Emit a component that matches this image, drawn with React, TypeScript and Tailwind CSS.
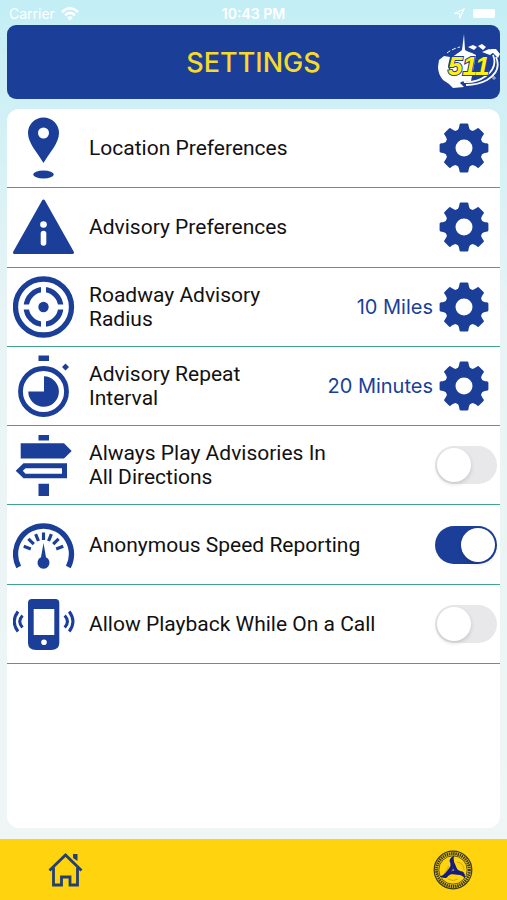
import React, { useState } from 'react';

const TOOTH_ANGLES = [0, 45, 90, 135, 180, 225, 270, 315];
const TICK_ANGLES = [-70, -46, -22, 0, 22, 46, 70];

const GearIcon = () => (
  <svg viewBox="0 0 50 50" className="block size-[50px] fill-[#1b3f98]" aria-hidden="true">
    <circle cx="25" cy="25" r="19" />
    {TOOTH_ANGLES.map((angle) => (
      <path
        key={angle}
        d="M16.5 8.5C19.5 7.5 20 5 20.6 1.5Q20.8.6 21.8.6H28.2Q29.2.6 29.4 1.5C30 5 30.5 7.5 33.5 8.5Z"
        transform={`rotate(${angle} 25 25)`}
      />
    ))}
    <circle cx="25" cy="25" r="8.5" fill="#fff" />
  </svg>
);

const PinIcon = () => (
  <>
    <path
      fillRule="evenodd"
      d="M30.5.5A15.5 15.5 0 0 0 15 16C15 26 24 35 30.5 46C37 35 46 26 46 16A15.5 15.5 0 0 0 30.5.5ZM30.5 10.5a5.5 5.5 0 1 1 0 11a5.5 5.5 0 0 1 0-11Z"
    />
    <ellipse cx="30.5" cy="57.5" rx="10.3" ry="4" />
  </>
);

const WarningIcon = () => (
  <>
    <path d="M30.5 5L59.5 56.5H1.5Z" stroke="#1b3f98" strokeWidth="3" strokeLinejoin="round" />
    <circle cx="30.5" cy="28.5" r="3.3" fill="#fff" />
    <path d="M30.5 37.5V47" stroke="#fff" strokeWidth="5.6" strokeLinecap="round" />
  </>
);

const RadiusIcon = () => (
  <>
    <g fill="none" stroke="#1b3f98" strokeWidth="5.3">
      <circle cx="30.5" cy="31" r="28" />
      <circle cx="30.5" cy="31" r="17.3" />
    </g>
    <path d="M30.5 10V22M30.5 40V52M9.5 31H21.5M39.5 31H51.5" stroke="#fff" strokeWidth="5" />
    <circle cx="30.5" cy="31" r="5.2" />
  </>
);

const TimerIcon = () => (
  <>
    <path d="M25.5.5H36V6H25.5ZM52.5 8.5L56 12L52.5 15.5L49 12Z" />
    <circle cx="30.5" cy="36.5" r="23" fill="none" stroke="#1b3f98" strokeWidth="4.8" />
    <path d="M31 21.2A15.3 15.3 0 1 1 15.3 36.5H31Z" />
  </>
);

const SignIcon = () => (
  <>
    <path d="M25.5 1H36V6.5H25.5ZM7.7 9.3H51L58.7 17L51 24.5H7.7ZM25.5 49.7H36V62H25.5Z" />
    <path fillRule="evenodd" d="M2.7 36.8L10.5 29.3H54V44.3H10.5ZM12.5 34.2L9.8 36.8L12.5 39.8H49V34.2Z" />
  </>
);

const SpeedIcon = () => (
  <>
    <path d="M5.7 53A28 28 0 1 1 55.3 53" fill="none" stroke="#1b3f98" strokeWidth="5.3" />
    {TICK_ANGLES.map((angle) => (
      <path
        key={angle}
        d="M30.5 18.5V26"
        stroke="#1b3f98"
        strokeWidth="3.2"
        transform={`rotate(${angle} 30.5 39.5)`}
      />
    ))}
    <path d="M30.5 29L33 43.3A6 6 0 1 1 28 43.3Z" />
  </>
);

const PhoneIcon = () => (
  <>
    <path
      fillRule="evenodd"
      d="M19 6H42.500Q46.3 6 46.3 10V50Q46.3 57 38 57H23Q15 57 15 50V10Q15 6 19 6ZM20.7 16V42H41.3V16ZM31 46.5a2.8 2.8 0 1 0 0 5.6a2.8 2.8 0 0 0 0-5.6Z"
    />
    <path
      d="M9.5 22.5Q4 28.5 9.5 34.5M5 18.5Q-2.5 28.5 5 38.5M51.7 22.5Q57.2 28.5 51.7 34.5M56.2 18.5Q63.7 28.5 56.2 38.5"
      fill="none"
      stroke="#1b3f98"
      strokeWidth="3"
    />
  </>
);

const Logo511 = () => (
  <svg viewBox="0 0 64 58" className="h-[58px] w-16" role="img" aria-label="511">
    <g fill="#fff">
      <path d="M28 1L29 17Q32 19 36 20L40 22L35 48L20 49L14 40L15 25Q22 20 26 17Z" />
      <path d="M8 23L14 24L12 33Q13 39 19 42L24 41L29 45L24 50L28 54L17 55L13 51L7 47Q2 41 2 34L3 27Z" />
      <path d="M32 14L37 12L41 14L38 17ZM42 13L46 11L50 14L47 17ZM46 19L53 16L58 19L54 22ZM54 16L60 16L64 21L62 25L58 21Z" />
    </g>
    <path d="M11 20Q16 16 24 14" fill="none" stroke="#fff" strokeWidth="1" strokeDasharray="4 2" />
    <path
      d="M57 22Q62 34 50 43Q40 50 28 49M60 24Q66 38 51 47Q42 52 30 52"
      fill="none"
      stroke="#fff"
      strokeWidth="1.8"
    />
    <circle cx="58" cy="45" r="1.2" fill="none" stroke="#fff" strokeWidth=".7" />
    <text
      x="12"
      y="42"
      fontFamily="'Liberation Sans', sans-serif"
      fontSize="26"
      fontWeight="700"
      fontStyle="italic"
      fill="#fff10a"
      stroke="#1b3f98"
      strokeWidth="2"
      paintOrder="stroke"
    >
      511
    </text>
  </svg>
);

const HomeIcon = () => (
  <svg viewBox="0 0 35 34" className="h-[34px] w-[35px]" aria-hidden="true">
    <g fill="none" stroke="#24406f" strokeWidth="2.8">
      <path d="M1.5 17.5L17.5 2L33.5 17.5" />
      <path d="M5.5 14.5V32H13.5V24H22V32H29.5V14.5" />
    </g>
    <path d="M25 1H29.5V8L25 5Z" fill="#24406f" />
  </svg>
);

const SealIcon = () => (
  <svg viewBox="0 0 40 40" className="size-10" aria-hidden="true">
    <g fill="none" stroke="#39391f">
      <circle cx="20" cy="20" r="18.8" strokeWidth="1.2" />
      <circle cx="20" cy="20" r="16.4" strokeWidth="3" strokeDasharray="1.5 .7" />
      <circle cx="20" cy="20" r="14.2" strokeWidth=".8" />
    </g>
    <path d="M10 26L16 16M24 12Q31 13 31 20M15 29Q20 32 25 29" fill="none" stroke="#c9a91a" strokeWidth="1" />
    <g fill="#141c80">
      {[0, 120, 240].map((angle) => (
        <path
          key={angle}
          d="M15.5 22Q19 15 16.5 11Q17 7 21.5 5.5Q19.5 9 22 14L24.5 20L21 21L19.8 17L18 22Z"
          transform={`rotate(${angle} 20 20)`}
        />
      ))}
    </g>
  </svg>
);

type Setting = {
  id: string;
  label: string;
  icon: React.FC;
  value?: string;
  toggle?: boolean;
};

const SETTINGS: Setting[] = [
  { id: 'location', label: 'Location Preferences', icon: PinIcon },
  { id: 'advisory', label: 'Advisory Preferences', icon: WarningIcon },
  { id: 'radius', label: 'Roadway Advisory\nRadius', icon: RadiusIcon, value: '10 Miles' },
  { id: 'repeat', label: 'Advisory Repeat\nInterval', icon: TimerIcon, value: '20 Minutes' },
  { id: 'directions', label: 'Always Play Advisories In\nAll Directions', icon: SignIcon, toggle: true },
  { id: 'speed', label: 'Anonymous Speed Reporting', icon: SpeedIcon, toggle: true },
  { id: 'playback', label: 'Allow Playback While On a Call', icon: PhoneIcon, toggle: true },
];

const App: React.FC = () => {
  const [enabled, setEnabled] = useState<Record<string, boolean>>({ speed: true });

  return (
    <div className="flex min-h-screen flex-col bg-linear-to-b from-[#c3eef5] via-[#e8f4f5] via-35% to-[#f0f6f5] font-['Inter','Liberation_Sans',sans-serif]">
      <div className="grid h-[25px] grid-cols-3 items-center px-[9px] pt-[2px] text-[14px] leading-4 text-white">
        <div className="flex items-center gap-[6px]">
          <span>Carrier</span>
          <svg viewBox="0 0 18 14" className="h-[14px] w-[18px]" aria-hidden="true">
            <path
              d="M1 5Q9-2.5 17 5M4 8.3Q9 3.5 14 8.3"
              fill="none"
              stroke="#fff"
              strokeWidth="2.5"
            />
            <path d="M6 10.5Q9 8 12 10.5L9 13.5Z" fill="#fff" />
          </svg>
        </div>
        <span className="text-center font-semibold">10:43 PM</span>
        <div className="flex items-center justify-end gap-2 pr-[3px]">
          <svg viewBox="0 0 12 12" className="size-3" aria-hidden="true">
            <path d="M11 1L1.5 5.5H6.5V10.5Z" fill="none" stroke="#fff" strokeWidth="1.2" />
          </svg>
          <span className="h-[9px] w-[22px] rounded-[2px] bg-white" />
        </div>
      </div>

      <header className="mx-[7px] grid h-[74px] grid-cols-[1fr_auto_1fr] items-center rounded-[9px] bg-[#1b3f98]">
        <h1 className="col-start-2 pt-[2px] text-[27px] leading-8 font-medium text-[#f7d92a]">SETTINGS</h1>
        <div className="flex justify-end">
          <Logo511 />
        </div>
      </header>

      <main className="mx-[7px] mt-[10px] mb-[11px] flex-1 rounded-xl bg-white">
        <ul className="grid min-h-[555px] auto-rows-fr">
          {SETTINGS.map(({ id, label, icon: Icon, value, toggle }) => (
            <li key={id} className="flex items-center border-b border-[#3fa58f] pr-[3px] pl-[6px]">
              <svg viewBox="0 0 62 62" className="size-[62px] shrink-0 fill-[#1b3f98]" aria-hidden="true">
                <Icon />
              </svg>
              <label
                htmlFor={id}
                className="ml-[14px] flex-1 font-['Roboto','Inter',sans-serif] text-[21px] leading-6 whitespace-pre-line text-[#111]"
              >
                {label}
              </label>
              {value && <span className="text-[20px] leading-6 text-[#1b3f98]">{value}</span>}
              {toggle ? (
                <input
                  id={id}
                  type="checkbox"
                  role="switch"
                  checked={!!enabled[id]}
                  onChange={(e) => setEnabled({ ...enabled, [id]: e.target.checked })}
                  className="flex h-[38px] w-[62px] shrink-0 cursor-pointer appearance-none items-center rounded-full bg-[#e8e8ea] px-[2px] before:size-[34px] before:rounded-full before:bg-white before:shadow-[0_2px_4px_rgba(0,0,0,0.15)] checked:justify-end checked:bg-[#1b3f98]"
                />
              ) : (
                <button id={id} type="button" className="mr-2 ml-[6px] shrink-0 cursor-pointer">
                  <GearIcon />
                </button>
              )}
            </li>
          ))}
        </ul>
      </main>

      <nav className="flex h-[61px] items-center justify-between bg-[#ffd30d] pr-[34px] pl-12">
        <a href="#home" aria-label="Home">
          <HomeIcon />
        </a>
        <a href="#ncdot" aria-label="Department of Transportation">
          <SealIcon />
        </a>
      </nav>
    </div>
  );
};

export default App;
